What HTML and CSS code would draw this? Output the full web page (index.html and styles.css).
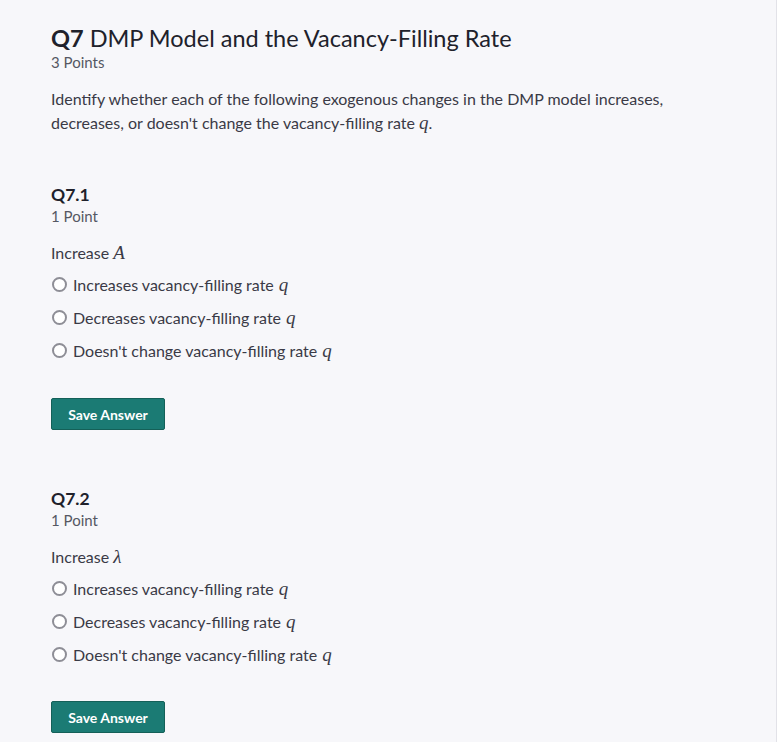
FILE: index.html
```html
<!DOCTYPE html>
<html>
<head>
<meta charset="utf-8">
<link rel="stylesheet" href="styles.css">
</head>
<body>
<div class="page">
  <div class="question">
    <h1 class="title"><b>Q7</b> DMP Model and the Vacancy-Filling Rate</h1>
    <div class="points">3 Points</div>
    <p class="prompt">Identify whether each of the following exogenous changes in the DMP model increases, decreases, or doesn't change the vacancy-filling rate <span class="m">q</span>.</p>
  </div>

  <div class="sub">
    <h2 class="subtitle">Q7.1</h2>
    <div class="points">1 Point</div>
    <p class="ask">Increase <span class="m">A</span></p>
    <ul class="options">
      <li class="opt"><span class="radio"></span>Increases vacancy-filling rate <span class="m">q</span></li>
      <li class="opt"><span class="radio"></span>Decreases vacancy-filling rate <span class="m">q</span></li>
      <li class="opt"><span class="radio"></span>Doesn't change vacancy-filling rate <span class="m">q</span></li>
    </ul>
    <button class="save">Save Answer</button>
  </div>

  <div class="sub">
    <h2 class="subtitle">Q7.2</h2>
    <div class="points">1 Point</div>
    <p class="ask">Increase <span class="m">λ</span></p>
    <ul class="options">
      <li class="opt"><span class="radio"></span>Increases vacancy-filling rate <span class="m">q</span></li>
      <li class="opt"><span class="radio"></span>Decreases vacancy-filling rate <span class="m">q</span></li>
      <li class="opt"><span class="radio"></span>Doesn't change vacancy-filling rate <span class="m">q</span></li>
    </ul>
    <button class="save">Save Answer</button>
  </div>
</div>
</body>
</html>
```

FILE: styles.css
```css
html, body {
  margin: 0;
  padding: 0;
  background: #ffffff;
}
body {
  font-family: Lato, "Open Sans", sans-serif;
  color: #2d2d38;
}
.page {
  box-sizing: border-box;
  width: 777px;
  min-height: 742px;
  background: #f7f7fa;
  border-right: 1px solid #e2e2e8;
  padding: 23px 0 0 51px;
}
.title {
  margin: 0;
  font-size: 23.5px;
  line-height: 30px;
  font-weight: 400;
  color: #20212b;
}
.title b {
  font-weight: 700;
}
.points {
  font-size: 15px;
  line-height: 19px;
  color: #555863;
}
.prompt {
  margin: 15px 0 0;
  font-size: 16px;
  line-height: 24px;
  color: #3a3a46;
  width: 660px;
}
.m {
  font-family: "Liberation Serif", "DejaVu Serif", serif;
  font-style: italic;
  font-size: 19px;
  line-height: 1;
}
.sub {
  margin-top: 48px;
}
.sub + .sub {
  margin-top: 57px;
}
.sub + .sub .save {
  margin-top: 30px;
}
.subtitle {
  margin: 0;
  font-size: 17.5px;
  line-height: 24px;
  font-weight: 700;
  color: #20212b;
}
.ask {
  margin: 15px 0 0;
  font-size: 16px;
  line-height: 24px;
  color: #3a3a46;
}
.options {
  list-style: none;
  margin: 3px 0 0;
  padding: 0;
}
.opt {
  display: flex;
  align-items: center;
  height: 33px;
  font-size: 16px;
  color: #3a3a46;
}
.opt .m {
  margin-left: 5px;
}
.radio {
  box-sizing: border-box;
  width: 15px;
  height: 15px;
  border: 2px solid #8e8e96;
  border-radius: 50%;
  margin: 0 6px 0 1px;
  background: #fff;
}
.save {
  display: block;
  margin-top: 31px;
  width: 114px;
  height: 32px;
  background: #1b7b74;
  border: 1px solid #146058;
  border-radius: 2px;
  color: #fff;
  font-family: Lato, "Open Sans", sans-serif;
  font-weight: 700;
  font-size: 14px;
  padding: 0;
}
```
